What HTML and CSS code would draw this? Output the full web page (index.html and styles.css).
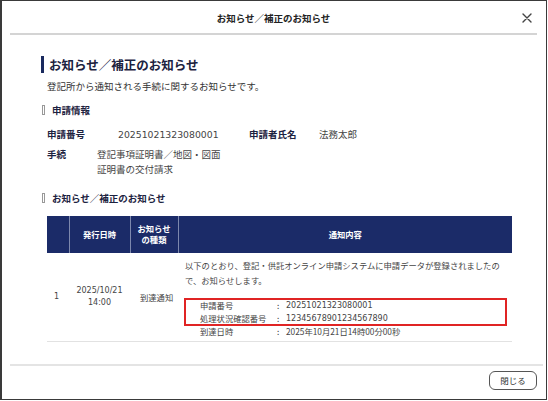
FILE: index.html
```html
<!DOCTYPE html>
<html lang="ja">
<head>
<meta charset="utf-8">
<title>お知らせ／補正のお知らせ</title>
<link rel="stylesheet" href="styles.css">
</head>
<body>
<div class="dialog">
  <div class="dlg-header">
    <div></div>
    <div class="dlg-title">お知らせ／補正のお知らせ</div>
    <button class="close" aria-label="閉じる">
      <svg width="10" height="10" viewBox="0 0 10 10"><path d="M1 1L9 9M9 1L1 9" stroke="#444" stroke-width="1.4" stroke-linecap="round"/></svg>
    </button>
  </div>
  <div class="content">
    <h1 class="page-title"><span class="bar"></span>お知らせ／補正のお知らせ</h1>
    <p class="desc">登記所から通知される手続に関するお知らせです。</p>
    <h2 class="sub"><span class="mark"></span>申請情報</h2>
    <div class="info">
      <div class="info-row">
        <span class="lbl lbl1">申請番号</span>
        <span class="val val1 n">20251021323080001</span>
        <span class="lbl lbl2">申請者氏名</span>
        <span class="val">法務太郎</span>
      </div>
      <div class="info-row">
        <span class="lbl lbl3">手続</span>
        <span class="val">登記事項証明書／地図・図面<br>証明書の交付請求</span>
      </div>
    </div>
    <h2 class="sub sub2"><span class="mark"></span>お知らせ／補正のお知らせ</h2>
    <table class="tbl">
      <colgroup><col class="c1"><col class="c2"><col class="c3"><col class="c4"></colgroup>
      <thead>
        <tr><th></th><th>発行日時</th><th>お知らせ<br>の種類</th><th>通知内容</th></tr>
      </thead>
      <tbody>
        <tr>
          <td class="num n">1</td>
          <td class="date n">2025/10/21<br>14:00</td>
          <td class="kind">到達通知</td>
          <td class="body">
            <div class="msg">以下のとおり、登記・供託オンライン申請システムに申請データが登録されましたので、お知らせします。</div>
            <div class="details">
              <div class="drow"><span class="dl">申請番号</span><span class="dc">:</span><span class="n">20251021323080001</span></div>
              <div class="drow"><span class="dl">処理状況確認番号</span><span class="dc">:</span><span class="n">12345678901234567890</span></div>
              <div class="drow"><span class="dl">到達日時</span><span class="dc">:</span><span>2025年10月21日14時00分00秒</span></div>
              <div class="highlight"></div>
            </div>
          </td>
        </tr>
      </tbody>
    </table>
  </div>
  <div class="dlg-footer">
    <button class="btn">閉じる</button>
  </div>
</div>
</body>
</html>
```
FILE: styles.css
```css
* { box-sizing: border-box; }
html, body { margin: 0; padding: 0; background: #fff; }
body {
  font-family: "Noto Sans CJK JP", "Noto Sans", sans-serif;
  color: #333;
  width: 548px;
  height: 401px;
}
.n { font-family: "DejaVu Sans", "Noto Sans CJK JP", sans-serif; }
.dialog {
  width: 547px;
  height: 400px;
  border: 1px solid #3a3a3a;
  border-left-width: 2px;
  display: flex;
  flex-direction: column;
  background: #fff;
}
.dlg-header {
  height: 34px;
  margin: 0 9px 0 8px;
  border-bottom: 2px solid #d4d4d4;
  display: grid;
  grid-template-columns: 1fr auto 1fr;
  align-items: center;
}
.dlg-title {
  font-size: 9.5px;
  font-weight: bold;
  color: #222;
  line-height: 14px;
  padding-top: 2px;
}
.close {
  justify-self: end;
  margin-right: 5px;
  margin-top: 2px;
  border: 0;
  background: none;
  padding: 0;
  width: 10px;
  height: 10px;
  display: flex;
}
.content {
  flex: 1;
  padding-left: 39px;
}
.page-title {
  margin: 21px 0 0 0;
  display: flex;
  align-items: center;
  gap: 5px;
  font-size: 12.5px;
  font-weight: bold;
  color: #1c2240;
  line-height: 17px;
}
.bar {
  width: 3px;
  height: 17px;
  background: #1a2a5e;
}
.desc {
  margin: 6px 0 0 6px;
  font-size: 9.5px;
  line-height: 14px;
  color: #333;
}
.sub {
  margin: 10px 0 0 1px;
  display: flex;
  align-items: center;
  gap: 7px;
  font-size: 9.5px;
  font-weight: bold;
  line-height: 14px;
  color: #1c2240;
}
.mark {
  width: 3px;
  height: 10px;
  border: 1px solid #999;
}
.sub2 { margin-top: 13.5px; }
.info {
  margin: 10px 0 0 6px;
  font-size: 9.5px;
}
.info-row {
  display: flex;
  line-height: 15px;
}
.info-row + .info-row { margin-top: 5px; }
.lbl { font-weight: bold; color: #1c2240; }
.lbl1 { width: 71px; }
.val1 { width: 131px; font-size: 9.3px; color: #444; }
.lbl2 { width: 70px; }
.lbl3 { width: 50px; }
.val { color: #444; }
.tbl {
  margin: 11px 0 0 6px;
  width: 465px;
  border-collapse: collapse;
  table-layout: fixed;
  font-size: 8.3px;
}
.c1 { width: 22px; }
.c2 { width: 61px; }
.c3 { width: 48px; }
.c4 { width: 334px; }
.tbl th {
  background: #1b2b68;
  color: #fff;
  font-weight: bold;
  height: 37px;
  line-height: 11px;
  padding: 0;
  text-align: center;
  border-left: 1px solid #7d88ad;
}
.tbl th:first-child { border-left: 0; }
.tbl td {
  height: 89px;
  padding: 0;
  color: #444;
  border-bottom: 1px solid #e2e2e2;
  vertical-align: middle;
}
.tbl td.num { padding-left: 7px; font-size: 8px; }
.tbl td.date { text-align: center; line-height: 11.5px; font-size: 8px; }
.tbl td.kind { padding-left: 10px; white-space: nowrap; }
.tbl td.body {
  vertical-align: top;
  padding: 5.5px 10px 0 7px;
}
.msg { line-height: 15px; }
.details {
  position: relative;
  margin-top: 11px;
  padding-left: 15px;
  line-height: 13px;
}
.drow { display: flex; }
.dl { width: 77px; }
.dc { width: 9px; }
.details .n { font-size: 8px; }
.highlight {
  position: absolute;
  left: -1px;
  top: -1.5px;
  width: 323px;
  height: 28px;
  border: 2px solid #e02424;
}
.dlg-footer {
  margin: 0 3px 0 8px;
  height: 35px;
  border-top: 2px solid #e4e4e4;
  display: flex;
  justify-content: flex-end;
  align-items: flex-start;
  padding: 5px 6px 0 0;
}
.btn {
  width: 48px;
  height: 19px;
  border: 1px solid #555;
  border-radius: 6px;
  background: #fff;
  font-family: "Noto Sans CJK JP", sans-serif;
  font-size: 8.5px;
  color: #333;
  padding: 0;
  line-height: 17px;
}
```
